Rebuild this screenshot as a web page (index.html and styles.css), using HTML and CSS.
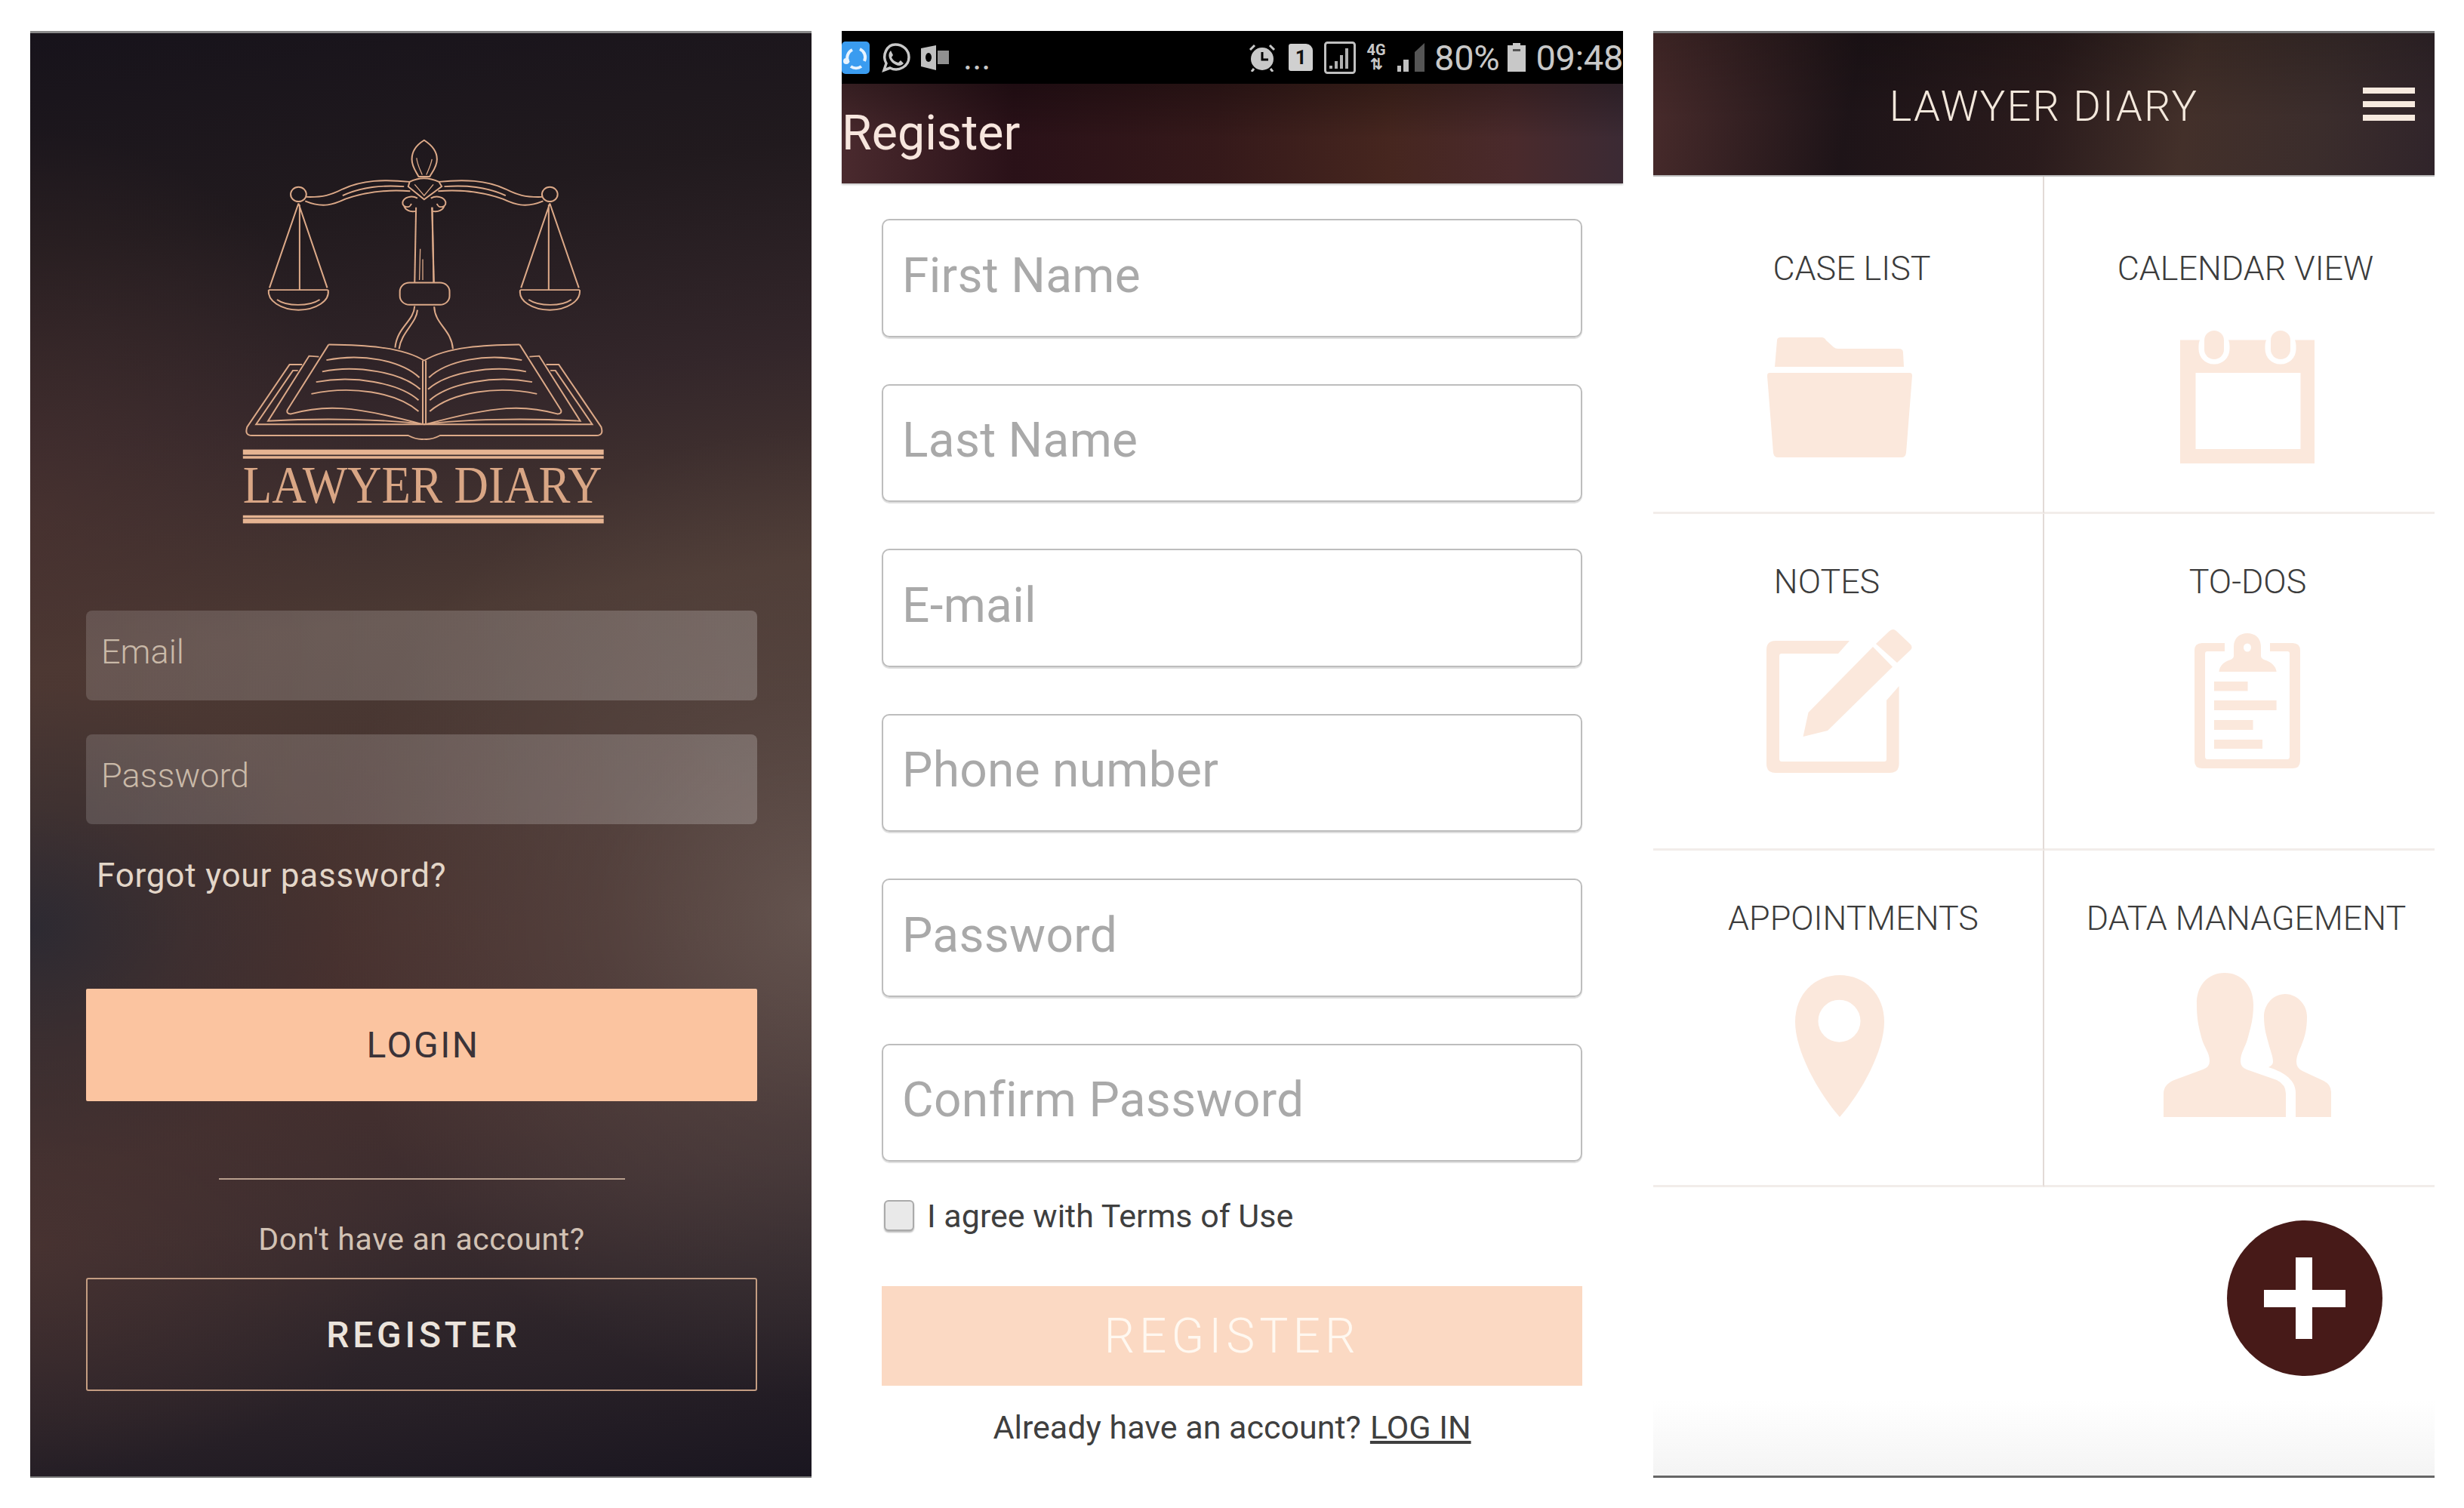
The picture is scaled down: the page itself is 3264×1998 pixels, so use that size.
FILE: index.html
```html
<!DOCTYPE html>
<html lang="en">
<head>
  <meta charset="UTF-8">
  <title>Lawyer Diary</title>
  <link rel="stylesheet" href="styles.css">
</head>
<body>

<!-- login -->
<section class="phone login">
  <svg class="logo" viewBox="0 0 1568 1568" preserveAspectRatio="none">
    <defs>
      <g id="logoHalf">
        <path d="M710 232C620 222 540 225 470 260C430 282 400 292 340 290"/>
        <path d="M712 268C640 262 560 268 480 298C440 318 400 335 336 306"/>
        <path class="thin" d="M690 250C610 245 540 250 470 285"/>
        <circle cx="312" cy="280" r="28"/>
        <path d="M312 315L208 640M312 315L415 640M316 320V645M205 648H418"/>
        <path d="M205 648C200 690 250 725 312 725C375 725 425 690 418 648"/>
        <path class="thin" d="M235 685C270 712 350 712 388 685"/>
        <path class="thin" d="M738 295C718 283 690 290 685 310C683 332 712 335 716 316M733 345C710 350 695 340 690 325"/>
        <path d="M733 330L728 620"/>
        <path d="M420 858C540 860 680 865 762 920"/>
        <path d="M420 858L272 1110Q268 1125 285 1125C400 1090 500 1090 756 1165"/>
        <path class="thin" d="M412 918C540 890 680 920 745 985M397 962C520 935 680 965 748 1030M375 1002C510 975 670 1005 742 1072M358 1048C500 1015 660 1040 742 1115"/>
        <path d="M325 935H280L128 1175Q118 1208 145 1208H705Q735 1225 762 1222"/>
        <path d="M310 958H292L160 1165H762"/>
        <path d="M385 905L350 902L203 1152C400 1140 620 1145 762 1165"/>
      </g>
    </defs>
    <g class="logoLines">
      <use href="#logoHalf"/>
      <use href="#logoHalf" transform="matrix(-1 0 0 1 1524 0)"/>
      <path d="M762 72C735 90 718 115 718 145C718 175 735 195 742 212L782 212C790 195 808 175 808 145C808 115 788 90 762 72Z"/>
      <path class="thin" d="M735 140C738 170 750 190 755 205M790 145C786 170 775 190 770 205"/>
      <path d="M710 232Q760 205 815 232L825 250L762 300L705 250Z"/>
      <path class="thin" d="M728 242L762 285L795 242"/>
      <path d="M790 330L797 620"/>
      <path class="thin" d="M748 490L745 610M757 530V610"/>
      <rect x="675" y="620" width="178" height="85" rx="34"/>
      <path d="M728 710C725 770 665 790 658 870M738 725C735 775 680 810 672 875M798 712C800 780 860 800 865 875"/>
      <path d="M757 920V1165M768 920V1165"/>
    </g>
    <g class="logoBars">
      <rect x="113" y="1262" width="1292" height="20"/>
      <rect x="113" y="1287" width="1292" height="10"/>
      <rect x="113" y="1515" width="1292" height="10"/>
      <rect x="113" y="1528" width="1292" height="18"/>
    </g>
    <text class="logoText" transform="translate(113 1465) scale(.83 1)">LAWYER DIARY</text>
  </svg>

  <div class="loginForm">
    <div class="darkField">Email</div>
    <div class="darkField">Password</div>
    <div class="forgot">Forgot your password?</div>
    <div class="loginButton">LOGIN</div>
    <div class="divider"></div>
    <div class="noAccount">Don't have an account?</div>
    <div class="outlineButton">REGISTER</div>
  </div>
</section>

<!-- register -->
<section class="phone register">
  <div class="statusBar">
    <svg class="shareIcon" width="37" height="43" viewBox="0 0 37 43">
      <rect width="37" height="43" rx="5" fill="#3a9cf0"/>
      <path d="M9 28A12 12 0 0 1 14 11M24 10A12 12 0 0 1 30 26M26 33A12 12 0 0 1 12 33" fill="none" stroke="#e8f4ff" stroke-width="4"/>
      <circle cx="6" cy="26" r="4" fill="#e8f4ff"/>
    </svg>
    <svg class="whatsIcon" width="42" height="42" viewBox="0 0 42 42">
      <path d="M6 38L9 29C3 18 10 4 21 4C31 4 39 11 39 21C39 32 26 41 14 35Z" fill="none" stroke="#c8c8c8" stroke-width="3.5"/>
      <path d="M15 12L18 18L16 21C18 25 21 27 25 28L28 25L32 29C28 34 22 32 17 28C13 24 10 17 15 12Z" fill="#c8c8c8"/>
    </svg>
    <svg class="mailIcon" width="37" height="33" viewBox="0 0 37 33">
      <path d="M0 4L20 0V33L0 28Z" fill="#c0c0c0"/>
      <rect x="22" y="7" width="15" height="18" fill="#909090"/>
      <ellipse cx="10" cy="16" rx="4" ry="6" fill="#000"/>
    </svg>
    <span class="dots">...</span>
    <svg class="alarmIcon" width="38" height="37" viewBox="0 0 38 37">
      <circle cx="19" cy="20" r="15" fill="#c8c8c8"/>
      <path d="M19 11V21H27" fill="none" stroke="#000" stroke-width="3"/>
      <path d="M3 8L9 2M35 8L29 2M8 33L5 37M30 33L33 37" stroke="#c8c8c8" stroke-width="3"/>
    </svg>
    <span class="simIcon">1</span>
    <svg class="boxIcon" width="42" height="43" viewBox="0 0 42 43">
      <rect x="1.5" y="1.5" width="39" height="40" rx="3" fill="none" stroke="#c0c0c0" stroke-width="3"/>
      <path d="M7 36h4v-4H7zM14 36h4V26h-4zM21 36h4V18h-4zM28 36h4V9h-4z" fill="#b0b0b0"/>
    </svg>
    <span class="netIcon">4G<br>⇅</span>
    <svg class="signalIcon" width="36" height="38" viewBox="0 0 36 38">
      <path d="M36 0V38H23V12Z" fill="#555"/>
      <path d="M0 38V30H5V38ZM8 38V22H15V38Z" fill="#c0c0c0"/>
    </svg>
    <span class="statusText">80%</span>
    <svg class="battIcon" width="24" height="38" viewBox="0 0 24 38">
      <path d="M7 0H17V3H24V38H0V3H7Z" fill="#c8c8c8"/>
      <rect x="7" y="8" width="10" height="3" fill="#555"/>
    </svg>
    <span class="statusText">09:48</span>
  </div>
  <div class="registerHead">Register</div>
  <div class="registerForm">
    <div class="lightField">First Name</div>
    <div class="lightField">Last Name</div>
    <div class="lightField">E-mail</div>
    <div class="lightField">Phone number</div>
    <div class="lightField">Password</div>
    <div class="lightField">Confirm Password</div>
    <label class="terms"><span class="checkBox"></span>I agree with Terms of Use</label>
    <div class="registerButton">REGISTER</div>
    <div class="haveAccount">Already have an account? <u>LOG IN</u></div>
  </div>
</section>

<!-- dashboard -->
<section class="phone home">
  <div class="homeHead">
    <span class="homeTitle">LAWYER DIARY</span>
    <div class="burger"><i></i><i></i><i></i></div>
  </div>
  <div class="tiles">
    <div class="tile firstRow leftTile">
      <div class="tileLabel caseLabel">CASE LIST</div>
      <svg class="folderIcon" width="192" height="159" viewBox="0 0 192 159">
        <path d="M10 39L13 4Q13 0 18 0H72Q76 0 78 4L88 13Q90 15 94 15H174Q180 15 180 20L181 39Z"/>
        <path d="M3 47H189Q192 47 192 51L184 153Q183 159 178 159H14Q9 159 8 153L0 51Q0 47 3 47Z"/>
      </svg>
    </div>
    <div class="tile firstRow rightTile">
      <div class="tileLabel calLabel">CALENDAR VIEW</div>
      <svg class="calIcon" width="178" height="176" viewBox="0 0 178 176">
        <path fill-rule="evenodd" d="M0 12.5H178V176H0ZM20.5 56V157H159.5V56Z"/>
        <rect class="cutOut" x="24.5" y="0" width="41" height="44.5" rx="20"/>
        <rect class="cutOut" x="112.5" y="0" width="41" height="44.5" rx="20"/>
        <rect x="32" y="0" width="26" height="38" rx="13"/>
        <rect x="120" y="0" width="26" height="38" rx="13"/>
      </svg>
    </div>
    <div class="tile leftTile">
      <div class="tileLabel notesLabel">NOTES</div>
      <svg class="notesIcon" width="194" height="191" viewBox="0 0 194 191">
        <path d="M12 16H110L95 33H20Q17 33 17 36V172Q17 176 20 176H156Q159 176 159 173V95L175.6 76V179Q175.6 191 163 191H12Q0 191 0 179V28Q0 16 12 16Z"/>
        <path d="M141 24L167 50.5L81 135L48.5 143L55.5 111Z"/>
        <path d="M145 20L163 3Q168 -1 172 3L191 21Q194 25 191 28L173 45Z"/>
      </svg>
    </div>
    <div class="tile rightTile">
      <div class="tileLabel todoLabel">TO-DOS</div>
      <svg class="todoIcon" width="140" height="179" viewBox="0 0 140 179">
        <path d="M10 13H40V24H17Q14 24 14 27V163Q14 167 17 167H123Q126 167 126 163V27Q126 24 123 24H100V13H130Q140 13 140 23V169Q140 179 130 179H10Q0 179 0 169V23Q0 13 10 13Z"/>
        <path d="M52 18C52 6 60 0 70 0C80 0 88 6 88 18V30Q88 33 92 35C102 38 108 44 108.6 51H32.5C33 44 38 38 48 35Q52 33 52 30Z"/>
        <ellipse class="cutOut" cx="70" cy="19" rx="5" ry="5.5"/>
        <rect x="26" y="64" width="44.5" height="12.5"/>
        <rect x="26" y="89" width="82.6" height="13"/>
        <rect x="26" y="115" width="51.5" height="13"/>
        <rect x="26" y="141" width="64" height="12"/>
      </svg>
    </div>
    <div class="tile leftTile">
      <div class="tileLabel apptLabel">APPOINTMENTS</div>
      <svg class="pinIcon" width="118" height="188" viewBox="0 0 118 188">
        <path d="M59 0C26 0 0 25 0 62C0 100 30 155 59 188C88 155 118 100 118 62C118 25 92 0 59 0Z"/>
        <ellipse class="cutOut" cx="58.5" cy="60.7" rx="28" ry="28"/>
      </svg>
    </div>
    <div class="tile rightTile">
      <div class="tileLabel dataLabel">DATA MANAGEMENT</div>
      <svg class="peopleIcon" width="222" height="191" viewBox="0 0 222 191">
        <path d="M81 0C58 0 43 18 44 42C44 60 46 70 50 85C54 100 61 105 61 117Q61 125 52 128L14 142Q0 148 0 160V191H162V160Q162 148 150 142L110 128Q102 125 102 117C102 105 108 100 112 85C116 70 119 60 119 42C119 18 104 0 81 0Z"/>
        <path d="M161 28C145 28 133 42 133 58C133 75 137 85 140 97C143 107 145 112 145 118Q145 122 139 125C155 130 176 140 175 160V191H222V158Q222 148 212 143L184 130Q176 126 176 118C176 110 180 103 183 95C187 85 190 75 190 58C190 42 177 28 161 28Z"/>
      </svg>
    </div>
  </div>
  <div class="fabRow">
    <div class="fab">
      <svg width="108" height="108" viewBox="0 0 108 108">
        <path d="M42 0H64V43H108V66H64V108H42V66H0V43H42Z" fill="#fff"/>
      </svg>
    </div>
  </div>
</section>

</body>
</html>
```

FILE: styles.css
```css
body {
  margin: 0;
  padding: 41px 40px 0;
  width: 3264px;
  height: 1998px;
  box-sizing: border-box;
  display: flex;
  gap: 40px;
  background: #fff;
  font-family: Roboto, "Liberation Sans", sans-serif;
  overflow: hidden;
}

.phone {
  width: 1035px;
  height: 1917px;
  box-sizing: border-box;
  flex: none;
}

/* login */
.login {
  padding-top: 117px;
  border-top: 3px solid #8a8a8a;
  border-bottom: 2px solid #777;
  background:
    radial-gradient(ellipse 640px 640px at 100% 61%, rgba(112, 96, 90, 0.72), rgba(112, 96, 90, 0.3) 45%, transparent),
    radial-gradient(ellipse 420px 320px at 0% 62%, rgba(40, 40, 50, 0.85), rgba(40, 40, 50, 0.3) 50%, transparent),
    radial-gradient(ellipse 520px 300px at 0% 84%, rgba(80, 54, 50, 0.6), transparent),
    radial-gradient(ellipse 460px 520px at 0% 34%, rgba(80, 54, 50, 0.55), transparent),
    radial-gradient(ellipse 760px 420px at 50% 68%, rgba(78, 48, 46, 0.5), transparent),
    linear-gradient(172deg, #17131b 0, #211a1e 14%, #33262a 27%, #4b3933 41%, #43322f 62%, #382c2f 79%, #2a2228 90%, #1a1620 100%);
}

.logo {
  display: block;
  width: 580px;
  height: 540px;
  margin-left: 240px;
}

.logoLines {
  fill: none;
  stroke: #dca988;
  stroke-width: 5.5;
}

.logoLines .thin {
  stroke-width: 3.5;
}

.logoBars {
  fill: #e6b492;
}

.logoText {
  font-family: "Liberation Serif", serif;
  font-size: 205px;
  fill: #d9a685;
}

.loginForm {
  margin: 108px 72px 0 74px;
}

.darkField {
  height: 119px;
  box-sizing: border-box;
  margin-bottom: 45px;
  padding: 0 0 10px 20px;
  display: flex;
  align-items: center;
  border-radius: 8px;
  background: linear-gradient(90deg, rgba(255, 255, 255, 0.15), rgba(255, 255, 255, 0.21));
  color: #c9b9a8;
  font-size: 45px;
  font-weight: 300;
}

.forgot {
  margin: -7px 0 0 14px;
  line-height: 60px;
  color: #e3d6c8;
  font-size: 44px;
  letter-spacing: 0.8px;
}

.loginButton {
  height: 149px;
  margin-top: 120px;
  padding-left: 4px;
  display: flex;
  align-items: center;
  justify-content: center;
  border-radius: 2px;
  background: #fbc4a0;
  color: #3b3338;
  font-size: 48px;
  letter-spacing: 2.5px;
}

.divider {
  width: 538px;
  height: 2px;
  margin: 102px auto 0;
  background: #b89f8d;
}

.noAccount {
  margin-top: 49px;
  line-height: 60px;
  text-align: center;
  color: #d2c2b4;
  font-size: 41px;
  letter-spacing: 0.6px;
}

.outlineButton {
  height: 150px;
  box-sizing: border-box;
  margin-top: 21px;
  padding-left: 5px;
  display: flex;
  align-items: center;
  justify-content: center;
  border: 2px solid #c49d82;
  border-radius: 3px;
  color: #ece4dc;
  font-size: 48px;
  font-weight: 500;
  letter-spacing: 4.8px;
}

/* register */
.statusBar {
  height: 70px;
  display: flex;
  align-items: center;
  background: #000;
  color: #c8c8c8;
}

.whatsIcon { margin-left: 13px; }
.mailIcon { margin-left: 13px; }

.dots {
  margin-left: 19px;
  font-size: 46px;
  line-height: 44px;
}

.alarmIcon { margin-left: auto; }

.simIcon {
  width: 32px;
  height: 36px;
  margin-left: 16px;
  border-radius: 3px 9px 3px 3px;
  background: #d0d0d0;
  color: #111;
  font-size: 26px;
  font-weight: 700;
  line-height: 36px;
  text-align: center;
}

.boxIcon { margin-left: 15px; }

.netIcon {
  width: 28px;
  margin-left: 13px;
  font-size: 20px;
  font-weight: 700;
  line-height: 19px;
  text-align: center;
}

.signalIcon { margin-left: 14px; }

.statusText {
  margin-left: 13px;
  font-size: 47px;
  letter-spacing: -0.3px;
}

.battIcon { margin-left: 11px; }

.registerHead {
  height: 132px;
  box-sizing: border-box;
  padding-bottom: 2px;
  display: flex;
  align-items: center;
  background:
    linear-gradient(180deg, rgba(0, 0, 0, 0.28), transparent 55%),
    linear-gradient(90deg, #4a2a2e 0, #2a1118 22%, #35191a 48%, #46261f 70%, #4a2a2c 86%, #3b2a34 100%);
  box-shadow: 0 2px 2px #ccc;
  color: #f7e6de;
  font-size: 64.5px;
}

.registerForm {
  margin: 47px 54px 0 53px;
  display: flex;
  flex-direction: column;
}

.lightField {
  height: 156.5px;
  box-sizing: border-box;
  margin-bottom: 62px;
  padding: 0 0 6px 25px;
  display: flex;
  align-items: center;
  border: 2px solid #bdbdbd;
  border-radius: 10px;
  box-shadow: 0 2px 1px #ddd;
  color: #a9a9a9;
  font-size: 64px;
  letter-spacing: 0.3px;
}

.terms {
  height: 41px;
  margin: -11px 0 0 3px;
  display: flex;
  align-items: center;
  color: #3f3f3f;
  font-size: 43px;
}

.checkBox {
  width: 40px;
  height: 41px;
  box-sizing: border-box;
  margin-right: 17px;
  border: 2px solid #aaa;
  border-radius: 6px;
  background: #e9e9e9;
  box-shadow: 0 2px 2px #bbb;
}

.registerButton {
  height: 132px;
  margin-top: 73px;
  display: flex;
  align-items: center;
  justify-content: center;
  background: #fbd9c3;
  color: #fff8f0;
  font-size: 64px;
  font-weight: 300;
  letter-spacing: 6px;
}

.haveAccount {
  height: 110px;
  display: flex;
  align-items: center;
  justify-content: center;
  gap: 12px;
  color: #3f3f3f;
  font-size: 43px;
}

/* dashboard */
.home {
  border-bottom: 3px solid #666;
  background: linear-gradient(0deg, #f4f4f4, #fff 100px);
}

.homeHead {
  height: 193px;
  box-sizing: border-box;
  padding: 6px 0 0 0;
  position: relative;
  display: flex;
  align-items: center;
  justify-content: center;
  border-top: 3px solid #777;
  border-bottom: 2px solid #bbb;
  background:
    linear-gradient(180deg, rgba(0, 0, 0, 0.2), transparent 60%),
    linear-gradient(100deg, #4a2c2c 0, #1e1418 26%, #2a1b1c 50%, #43302a 68%, #3b2d2c 85%, #30242a 100%);
}

.homeTitle {
  color: #f3e8dc;
  font-size: 56px;
  font-weight: 300;
  letter-spacing: 2.2px;
}

.burger {
  position: absolute;
  top: 72px;
  right: 26px;
  width: 69px;
  display: flex;
  flex-direction: column;
  gap: 10px;
}

.burger i {
  height: 8px;
  background: #f7eadf;
}

.tiles {
  display: grid;
  grid-template-columns: 518px 517px;
  grid-template-rows: 447px 446px 446px;
}

.tile {
  box-sizing: border-box;
  padding-top: 60px;
  display: flex;
  flex-direction: column;
  align-items: center;
  border-bottom: 3px solid #f2edea;
}

.firstRow { padding-top: 92px; }
.leftTile { border-right: 2px solid #e2dad6; }

.tile svg {
  fill: #fbe8dc;
  flex: none;
}

.leftTile svg { margin-right: 22px; }
.rightTile svg { margin-left: 20px; }

.cutOut { fill: #fff; }

.tileLabel {
  line-height: 60px;
  color: #3c3c3c;
  font-size: 44.8px;
  font-weight: 300;
  white-space: nowrap;
}

.caseLabel { margin-left: 10px; }
.calLabel { margin-left: 16px; }
.notesLabel { margin-right: 56px; }
.todoLabel { margin-left: 22px; }
.apptLabel { margin-left: 14px; }
.dataLabel { margin-left: 18px; }

.tile .folderIcon { margin-top: 61px; }
.tile .calIcon { margin-top: 52px; }
.tile .notesIcon { margin-top: 32px; }
.tile .todoIcon { margin-top: 38px; }
.tile .pinIcon { margin-top: 45px; }
.tile .peopleIcon { margin-top: 42px; }

.fabRow {
  padding: 44px 69px 0 0;
  display: flex;
  justify-content: flex-end;
}

.fab {
  width: 206px;
  height: 206px;
  display: flex;
  align-items: center;
  justify-content: center;
  border-radius: 50%;
  background: #471a18;
}
```
